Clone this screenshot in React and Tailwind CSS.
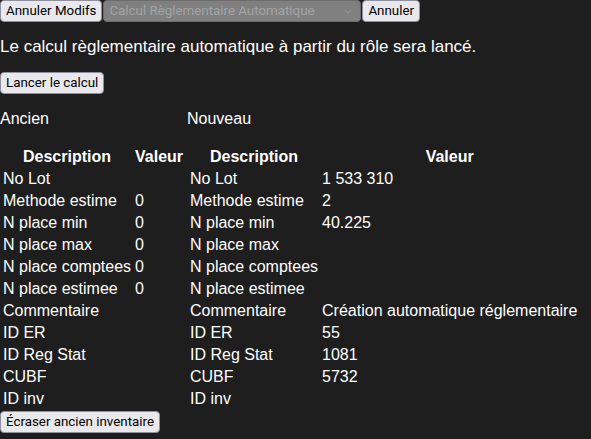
import { ChevronDown } from 'lucide-react'

const ancien = [
  ['No Lot', ''],
  ['Methode estime', '0'],
  ['N place min', '0'],
  ['N place max', '0'],
  ['N place comptees', '0'],
  ['N place estimee', '0'],
  ['Commentaire', ''],
  ['ID ER', ''],
  ['ID Reg Stat', ''],
  ['CUBF', ''],
  ['ID inv', ''],
]

const nouveau = [
  ['No Lot', '1 533 310'],
  ['Methode estime', '2'],
  ['N place min', '40.225'],
  ['N place max', ''],
  ['N place comptees', ''],
  ['N place estimee', ''],
  ['Commentaire', 'Création automatique réglementaire'],
  ['ID ER', '55'],
  ['ID Reg Stat', '1081'],
  ['CUBF', '5732'],
  ['ID inv', ''],
]

const Btn = ({ children }) => (
  <button className="h-[22px] px-[5px] bg-[#e9e9ed] border border-[#8f8f9d] rounded-[4px] text-black text-[13.33px] leading-none font-['Roboto',sans-serif] whitespace-nowrap">
    {children}
  </button>
)

const Inventaire = ({ titre, rows }) => (
  <div>
    <p className="my-4">{titre}</p>
    <table className="border-separate border-spacing-[2px]">
      <thead>
        <tr>
          <th className="p-px pt-[2px] font-bold text-center">Description</th>
          <th className="p-px pt-[2px] font-bold text-center">Valeur</th>
        </tr>
      </thead>
      <tbody>
        {rows.map(([desc, val]) => (
          <tr key={desc}>
            <td className="p-px whitespace-nowrap">{desc}</td>
            <td className="p-px whitespace-nowrap">{val}</td>
          </tr>
        ))}
      </tbody>
    </table>
  </div>
)

export default function App() {
  return (
    <div className="min-h-screen bg-[#1e1e1e] text-white text-base leading-[18px] font-['Liberation_Sans',Arial,sans-serif]">
      {/* barre du haut */}
      <div className="flex items-start gap-px">
        <Btn>Annuler Modifs</Btn>
        <div className="relative w-[258px] h-[22px] bg-[#808080] border border-[#6b6b6b] rounded-[4px] flex items-center pl-[5px] text-[#a3a3a3] text-[13.33px] font-['Roboto',sans-serif]">
          Calcul Règlementaire Automatique
          <ChevronDown className="absolute right-[7px] top-[6px] w-[10px] h-[10px] text-[#a0a0a0]" strokeWidth={2} />
        </div>
        <Btn>Annuler</Btn>
      </div>

      <p className="my-4 text-[17px]">Le calcul règlementaire automatique à partir du rôle sera lancé.</p>
      <Btn>Lancer le calcul</Btn>

      <div className="flex">
        <div className="w-[187px]">
          <Inventaire titre="Ancien" rows={ancien} />
        </div>
        <Inventaire titre="Nouveau" rows={nouveau} />
      </div>

      <Btn>Écraser ancien inventaire</Btn>
    </div>
  )
}
